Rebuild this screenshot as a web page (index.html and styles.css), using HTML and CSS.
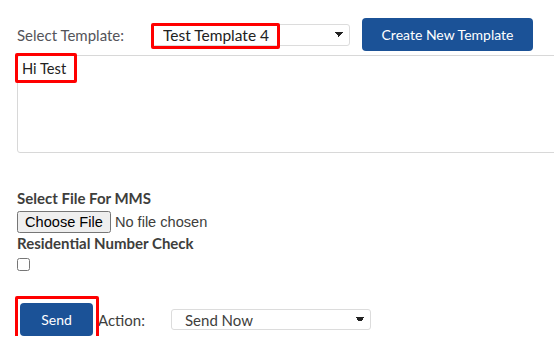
FILE: index.html
```html
<!DOCTYPE html>
<html lang="en">
<head>
  <meta charset="UTF-8">
  <meta name="viewport" content="width=device-width, initial-scale=1.0">
  <title>Send Message</title>
  <link rel="stylesheet" href="styles.css">
</head>
<body>

  <div class="panel">
    <div class="template-row">
      <label for="template" class="row-label">Select Template:</label>
      <div class="select-wrap">
        <select id="template" class="select template-select">
          <option>Test Template 4</option>
        </select>
        <span class="mark mark-template"></span>
      </div>
      <button type="button" class="button create-button">Create New Template</button>
    </div>

    <div class="message-wrap">
      <textarea id="message" class="message">Hi Test</textarea>
      <span class="mark mark-message"></span>
    </div>

    <div class="file-group">
      <label for="mmsFile" class="field-label">Select File For MMS</label>
      <input type="file" id="mmsFile" class="file-input">
      <label for="residential" class="field-label">Residential Number Check</label>
      <input type="checkbox" id="residential" class="checkbox">
    </div>

    <div class="send-row">
      <div class="send-wrap">
        <button type="button" class="button send-button">Send</button>
        <span class="mark mark-send"></span>
      </div>
      <label for="action" class="action-label">Action:</label>
      <select id="action" class="select action-select">
        <option>Send Now</option>
      </select>
    </div>
  </div>

</body>
</html>
```

FILE: styles.css
```css
body {
  margin: 0;
  font-family: Lato, 'Open Sans', sans-serif;
  font-size: 15px;
  color: #3e3e3c;
  background: #fff;
  overflow: hidden;
}
.panel {
  padding: 18px 0 0 17px;
}
.template-row {
  display: flex;
  align-items: center;
  height: 33px;
}
.row-label {
  width: 135px;
  color: #54545a;
}
.select-wrap,
.message-wrap,
.send-wrap {
  position: relative;
}
.select {
  font-family: Lato, 'Open Sans', sans-serif;
  font-size: 15px;
  background: #fff;
  border: 1px solid #dcdcdc;
  border-radius: 3px;
  padding: 0 0 0 8px;
  appearance: none;
  background-image: linear-gradient(45deg, transparent 50%, #222 50%), linear-gradient(-45deg, transparent 50%, #222 50%);
  background-size: 4px 6px, 4px 6px;
  background-position: right 10px center, right 6px center;
  background-repeat: no-repeat;
}
.template-select {
  width: 198px;
  height: 22px;
  color: #222;
  padding-left: 10px;
  font-size: 15.5px;
}
.mark {
  position: absolute;
  border: 3px solid #f00;
  border-radius: 2px;
  box-sizing: border-box;
  pointer-events: none;
}
.mark-template {
  left: -1px;
  top: -1px;
  width: 129px;
  height: 26px;
}
.button {
  font-family: Lato, 'Open Sans', sans-serif;
  font-size: 14px;
  color: #fff;
  background: #1b5297;
  border: none;
  border-radius: 4px;
  cursor: pointer;
}
.create-button {
  margin-left: 12px;
  width: 171px;
  height: 33px;
}
.message-wrap {
  margin-top: 4px;
}
.message {
  display: block;
  box-sizing: border-box;
  width: 560px;
  height: 98px;
  padding: 3px 4px;
  border: 1px solid #d8d8d8;
  border-radius: 3px;
  font-family: Lato, 'Open Sans', sans-serif;
  font-size: 14.7px;
  color: #222;
  resize: none;
}
.mark-message {
  left: -2px;
  top: -2px;
  width: 62px;
  height: 30px;
}
.file-group {
  margin-top: 36px;
  display: flex;
  flex-direction: column;
  align-items: flex-start;
}
.field-label {
  font-weight: 700;
  line-height: 18px;
}
.file-input {
  margin: 4px 0 1px;
  font-family: 'Liberation Sans', Arial, sans-serif;
  font-size: 14.6px;
}
.checkbox {
  margin: 6px 0 0;
  width: 13px;
  height: 13px;
}
.send-row {
  margin-top: 32px;
  display: flex;
  align-items: center;
}
.send-wrap {
  margin-left: 3px;
}
.send-button {
  display: block;
  width: 73px;
  height: 33px;
}
.mark-send {
  left: -5px;
  top: -7px;
  width: 84px;
  height: 48px;
}
.action-label {
  margin-left: 5px;
  width: 73px;
  color: #3e3e3c;
}
.action-select {
  width: 200px;
  height: 21px;
  padding-left: 13px;
  color: #3e3e3c;
}
```
